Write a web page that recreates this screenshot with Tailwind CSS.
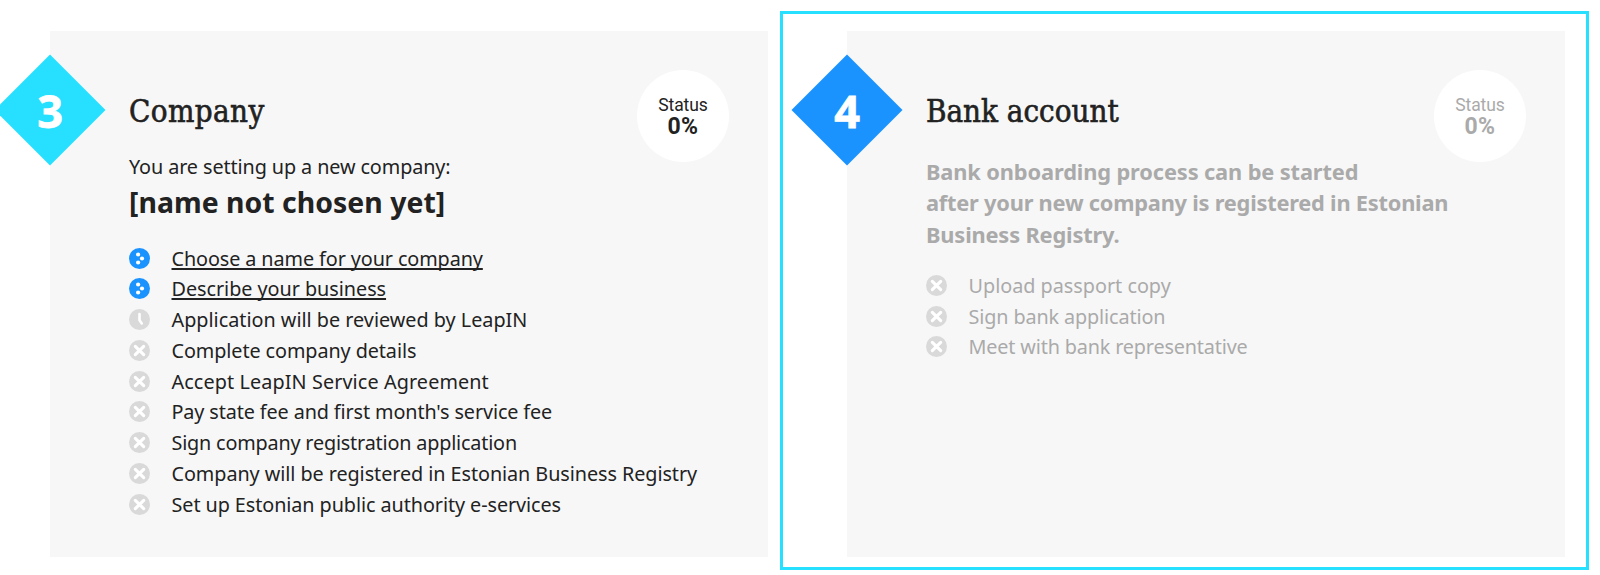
<!DOCTYPE html>
<html lang="en">
<head>
<meta charset="utf-8">
<title>Onboarding steps</title>
<script src="https://cdn.jsdelivr.net/npm/@tailwindcss/browser@4"></script>
</head>
<body class="bg-white overflow-hidden">
<svg class="hidden">
  <symbol id="go" viewBox="0 0 21 21"><circle cx="10.5" cy="10.5" r="10.5" fill="#1b93ff"/><g fill="#fff"><circle cx="9.1" cy="6.5" r="2.1"/><circle cx="13" cy="10.5" r="2.1"/><circle cx="9.1" cy="14.5" r="2.1"/></g></symbol>
  <symbol id="wait" viewBox="0 0 21 21"><circle cx="10.5" cy="10.5" r="10.5" fill="#d9d9d9"/><path d="M10.5 5v6.2l2.3 3.2" fill="none" stroke="#fff" stroke-width="2.6" stroke-linecap="round" stroke-linejoin="round"/></symbol>
  <symbol id="no" viewBox="0 0 21 21"><circle cx="10.5" cy="10.5" r="10.5" fill="#d9d9d9"/><path d="M6.3 6.3l8.4 8.4M14.7 6.3l-8.4 8.4" fill="none" stroke="#fff" stroke-width="3.1" stroke-linecap="round"/></symbol>
</svg>
<main class="flex h-[575px] w-[1600px] items-start pt-[11px] font-['Noto_Sans',sans-serif] text-[#222]">

  <section class="relative mt-[20px] ml-[50px] h-[526px] w-[718px] shrink-0 bg-[#f7f7f7] pl-[79px] pt-[60px]">
    <svg class="absolute -left-[56px] top-[23px] size-[112px]" viewBox="0 0 112 112"><path d="M56 .5L111.5 56 56 111.5.5 56z" fill="#27e0ff"/></svg>
    <span class="absolute -left-[56px] top-[48px] w-[112px] text-center font-['Open_Sans'] text-[45px] leading-[64px] font-bold text-white [-webkit-text-stroke:0.8px_#fff]">3</span>
    <div class="absolute left-[587px] top-[39px] flex size-[92px] flex-col items-center rounded-full bg-white pt-[25px] font-['Roboto']">
      <span class="text-[17.5px] leading-[21px] tracking-[-0.1px]">Status</span>
      <span class="text-[23px] leading-[21px] font-bold tracking-[0.4px]">0%</span>
    </div>
    <h2 class="font-['DejaVu_Serif_Condensed','DejaVu_Serif',serif] text-[31px] leading-[40px] tracking-[0.4px] [-webkit-text-stroke:0.6px_#222]">Company</h2>
    <p class="mt-[22px] text-[19.8px] leading-[28px] tracking-[-0.09px]">You are setting up a new company:</p>
    <p class="text-[28.4px] leading-[42px] font-bold tracking-[0.03px]">[name not chosen yet]</p>
    <ul class="mt-[20.5px] text-[19.8px] leading-[30.75px] whitespace-nowrap">
      <li class="flex h-[30.75px] gap-[21.5px]"><svg class="mt-[4px] size-[21px]"><use href="#go"/></svg><a class="tracking-[-0.09px] underline decoration-[1.5px] underline-offset-[2px] [text-decoration-skip-ink:none]">Choose a name for your company</a></li>
      <li class="flex h-[30.75px] gap-[21.5px]"><svg class="mt-[4px] size-[21px]"><use href="#go"/></svg><a class="tracking-[-0.03px] underline decoration-[1.5px] underline-offset-[2px] [text-decoration-skip-ink:none]">Describe your business</a></li>
      <li class="flex h-[30.75px] gap-[21.5px]"><svg class="mt-[4px] size-[21px]"><use href="#wait"/></svg><span>Application will be reviewed by LeapIN</span></li>
      <li class="flex h-[30.75px] gap-[21.5px]"><svg class="mt-[4px] size-[21px]"><use href="#no"/></svg><span class="tracking-[-0.08px]">Complete company details</span></li>
      <li class="flex h-[30.75px] gap-[21.5px]"><svg class="mt-[4px] size-[21px]"><use href="#no"/></svg><span class="tracking-[0.11px]">Accept LeapIN Service Agreement</span></li>
      <li class="flex h-[30.75px] gap-[21.5px]"><svg class="mt-[4px] size-[21px]"><use href="#no"/></svg><span class="tracking-[-0.11px]">Pay state fee and first month's service fee</span></li>
      <li class="flex h-[30.75px] gap-[21.5px]"><svg class="mt-[4px] size-[21px]"><use href="#no"/></svg><span class="tracking-[-0.18px]">Sign company registration application</span></li>
      <li class="flex h-[30.75px] gap-[21.5px]"><svg class="mt-[4px] size-[21px]"><use href="#no"/></svg><span class="tracking-[-0.06px]">Company will be registered in Estonian Business Registry</span></li>
      <li class="flex h-[30.75px] gap-[21.5px]"><svg class="mt-[4px] size-[21px]"><use href="#no"/></svg><span class="tracking-[-0.07px]">Set up Estonian public authority e-services</span></li>
    </ul>
  </section>

  <div class="ml-[12px] h-[559px] w-[809px] shrink-0 border-[3px] border-[#27e0ff] pt-[17px] pl-[64px]">
    <section class="relative h-[526px] w-[718px] bg-[#f7f7f7] pl-[79px] pt-[60px] text-[#aaa]">
      <svg class="absolute -left-[56px] top-[23px] size-[112px]" viewBox="0 0 112 112"><path d="M56 .5L111.5 56 56 111.5.5 56z" fill="#1b93ff"/></svg>
      <span class="absolute -left-[56px] top-[48px] w-[112px] text-center font-['Open_Sans'] text-[45px] leading-[64px] font-bold text-white [-webkit-text-stroke:0.8px_#fff]">4</span>
      <div class="absolute left-[587px] top-[39px] flex size-[92px] flex-col items-center rounded-full bg-white pt-[25px] font-['Roboto']">
        <span class="text-[17.5px] leading-[21px] tracking-[-0.1px]">Status</span>
        <span class="text-[23px] leading-[21px] font-bold tracking-[0.4px]">0%</span>
      </div>
      <h2 class="font-['DejaVu_Serif_Condensed','DejaVu_Serif',serif] text-[31px] leading-[40px] text-[#222] [-webkit-text-stroke:0.6px_#222]">Bank account</h2>
      <p class="mt-[24.5px] text-[21.8px] leading-[31.5px] font-bold whitespace-nowrap"><span class="tracking-[-0.12px]">Bank onboarding process can be started</span><br><span class="tracking-[-0.22px]">after your new company is registered in Estonian</span><br><span class="tracking-[-0.16px]">Business Registry.</span></p>
      <ul class="mt-[20.75px] text-[19.8px] leading-[30.75px] whitespace-nowrap">
        <li class="flex h-[30.75px] gap-[21.5px]"><svg class="mt-[4px] size-[21px]"><use href="#no"/></svg><span>Upload passport copy</span></li>
        <li class="flex h-[30.75px] gap-[21.5px]"><svg class="mt-[4px] size-[21px]"><use href="#no"/></svg><span class="tracking-[-0.12px]">Sign bank application</span></li>
        <li class="flex h-[30.75px] gap-[21.5px]"><svg class="mt-[4px] size-[21px]"><use href="#no"/></svg><span class="tracking-[-0.15px]">Meet with bank representative</span></li>
      </ul>
    </section>
  </div>
</main>
</body>
</html>
